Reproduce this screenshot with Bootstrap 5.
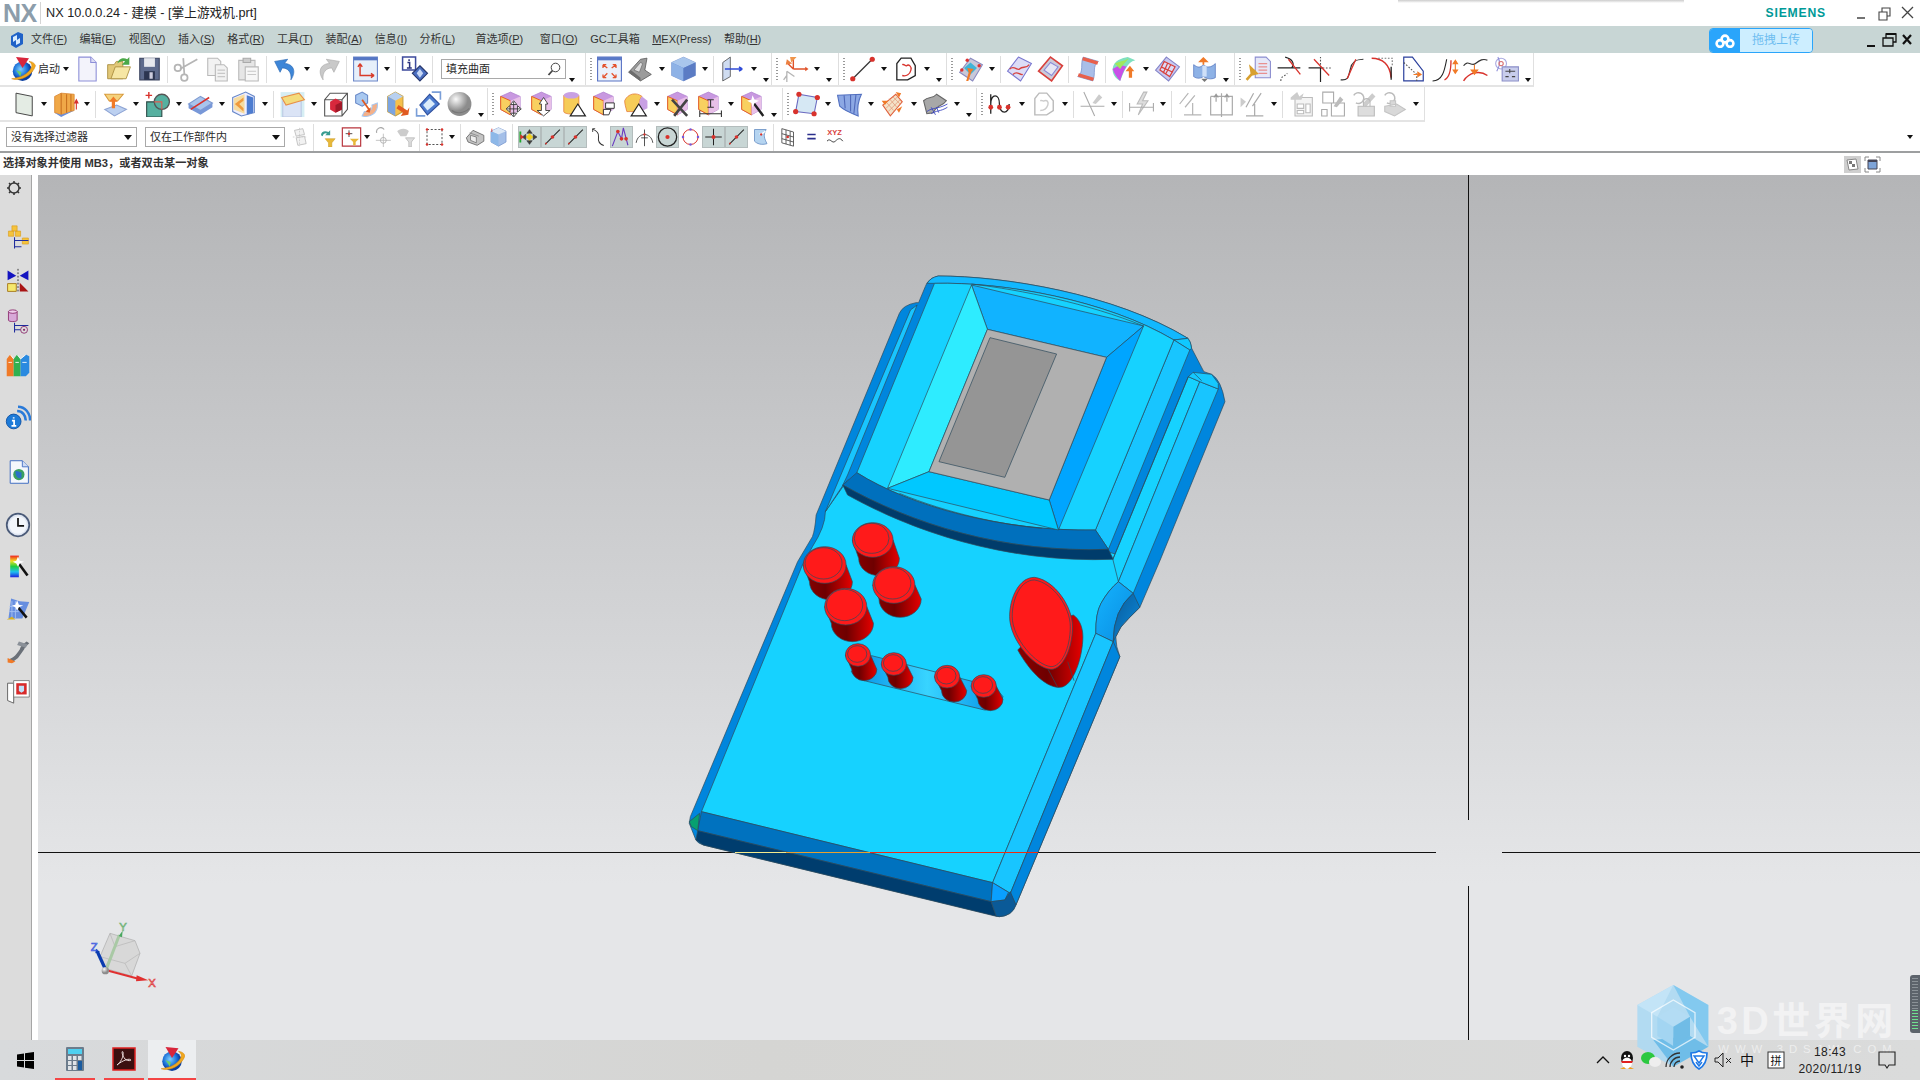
<!DOCTYPE html>
<html lang="zh">
<head>
<meta charset="utf-8">
<title>NX 10.0.0.24</title>
<link rel="stylesheet" href="https://cdn.jsdelivr.net/npm/bootstrap@5.3.0/dist/css/bootstrap.min.css">
<style>
html,body{margin:0;height:1080px;overflow:hidden;background:#fff}
body{width:1920px;font:11px "Liberation Sans","Noto Sans CJK SC",sans-serif;color:#2a2a2a;line-height:1}
.ttlbar{height:26px;position:relative}
.nxlogo{width:41px;padding-left:3px;font:bold 25px "Liberation Sans",sans-serif;color:#8c9dab;border-right:1px solid #d5d5d5;height:22px;line-height:22px;letter-spacing:-.5px}
.ttltext{margin-left:5px;font-size:12.7px;color:#222}
.siem{font:bold 12.2px "Liberation Sans",sans-serif;color:#009a98;letter-spacing:.8px;margin-right:28px}
.winbtn{width:22px;height:18px}
.wb2{width:18px;height:18px}
.shade{position:absolute;left:1398px;top:0;width:286px;height:3px;background:linear-gradient(#ccc,#fff);}
.menubar{height:27px;background:#c8d6d5}
.menubar .mlogo{width:16px;height:18px;margin:0 6px 0 9px}
.mitems{gap:12.5px;font-size:11px;color:#333}
.mitems u{text-underline-offset:1px}
.upl{width:104px;height:25px;margin-top:2px;border:1px solid #2aa5fb;border-radius:4px;overflow:hidden;margin-right:49px}
.upl b{width:30px;height:100%;background:#2aa5fb}
.upl span{flex:1;background:#cdeeff;color:#6dbdf0;font-size:12px;text-align:center;line-height:23px}
.tb{display:flex;align-items:center;background:#fff;flex:none}
.tb1{height:34px;width:1534px;border-right:1px solid #e0e0e0;border-bottom:2px solid #e4e4e4}
.tb2{height:35px;width:1425px;padding-top:1px;border-right:1px solid #e0e0e0;border-bottom:2px solid #e4e4e4}
.tb3{height:31px;width:1920px;padding-left:6px;padding-top:1px;border-bottom:2px solid #9d9fa0;position:relative}
.i{width:31px;height:26px;flex:none}
.tb3 .i{width:23px;height:20px}
.tb3 .i.tg{height:22px;background:#c8d6d5;outline:1px solid #b4bdbd;outline-offset:-1px}
.cr{width:12px;height:10px;flex:none;display:flex;justify-content:center;align-items:center}
.cr.w8{width:8px}
.cr::after,.cb::after{content:"";border:3.5px solid transparent;border-top:4px solid #111;border-bottom:0}
.cb{width:11px;height:14px;flex:none;display:flex;justify-content:center;align-items:flex-end;align-self:center;padding-bottom:0;margin-top:12px}
.sp{width:6px;height:27px;flex:none;position:relative}
.sp::after{content:"";position:absolute;left:2px;top:0;bottom:0;width:1px;background:#dedede}
.gs{width:9px;height:32px;flex:none;border-left:1px solid #dedede;position:relative}
.gs::after{content:"";position:absolute;left:4px;top:5px;bottom:3px;width:2px;background:repeating-linear-gradient(#999 0 1px,transparent 1px 3px)}
.s1{width:1px;flex:none}.s2{width:2px;flex:none}.s3{width:3px;flex:none}.s4{width:4px;flex:none}
.cbx{border:1px solid #a9a9a9;height:20px;padding:0 4px;background:#fff;font-size:11px;flex:none}
.cbx::after{content:"";border:4px solid transparent;border-top:5px solid #111;border-bottom:0}
.srch{width:125px;margin-left:5px}
.srch::after{display:none}
.f1{width:131px}.f2{width:140px;margin-left:8px}
.stat{height:22px;padding:0 3px;font-size:11.2px;font-weight:bold;color:#333;flex:none}
.stat svg{width:17px;height:17px;margin-left:3px}
.stat .endic{margin-right:36px}
.mainar{flex:1;min-height:0;position:relative}
.lp{width:32px;background:#dcdcdc;border-right:1px solid #a6a6a6;flex:none}
.lp svg{width:26px;height:26px;display:block;flex:none;margin-left:5px}
.lp svg:nth-child(1){height:18px;width:30px;margin:4px 0 0}
.lp svg:nth-child(2){margin-top:28px}.lp svg:nth-child(3){margin-top:17px}.lp svg:nth-child(4){margin-top:15px}
.lp svg:nth-child(5){margin-top:17px}.lp svg:nth-child(6){margin-top:27px}.lp svg:nth-child(7){margin-top:28px}
.lp svg:nth-child(8){margin-top:27px}.lp svg:nth-child(9){margin-top:15px}.lp svg:nth-child(10){margin-top:17px}
.lp svg:nth-child(11){margin-top:17px}.lp svg:nth-child(12){margin-top:13px}
.lpgap{width:6px;flex:none;background:#fff}
.vp{flex:1;position:relative;overflow:hidden;background:linear-gradient(#b4b5b7 0,#e5e6e8 82%,#e5e6e8 100%)}
.vp>svg{position:absolute;left:0;top:0;width:1882px;height:865px}
.mdl *{vector-effect:non-scaling-stroke;stroke:#2e4a5c;stroke-width:.7}
.mdl .ln{fill:none}
.tkb{height:40px;flex:none;background:linear-gradient(90deg,#d8dadc,#d5d5d3 40%,#dadbdb);position:relative}
.tkb .st{width:50px;height:40px}
.tapp{width:40px;height:40px;border-bottom:2px solid #f44545;margin-right:9px}
.tapp.act{width:48px;background:#eceef0}
.tapp svg{width:26px;height:26px}
.tray{z-index:2;margin-right:21px;height:40px}
.tray svg{width:24px;height:20px;flex:none}
.tray .ch{width:24px;text-align:center;font-size:14px;color:#111;flex:none}
.clock{width:76px;margin:0 7px 0 4px;text-align:center;font-size:12px;color:#222;letter-spacing:.4px;gap:5px}
.wm{position:absolute;left:1580px;top:960px;width:340px;height:120px;z-index:1}
.sld{position:absolute;left:1910px;top:975px;width:10px;height:58px;background:#5c636b;border-radius:3px 0 0 3px;z-index:1;padding:3px 2px}
.sld i{display:block;height:100%;background:repeating-linear-gradient(#8a9197 0 1px,transparent 1px 3px);position:relative}
.sld i::after{content:"";position:absolute;left:0;right:0;bottom:0;height:20px;background:repeating-linear-gradient(#6fe08f 0 1px,#5c636b 1px 3px)}
.defs{position:absolute;width:0;height:0}
</style>
</head>
<body class="d-flex flex-column">
<svg class="defs" aria-hidden="true">
<defs>
<linearGradient id="gR" x1="0" x2="1" y1="0" y2="0"><stop offset="0" stop-color="#8c0000"/><stop offset=".45" stop-color="#6e0000"/><stop offset="1" stop-color="#e60000"/></linearGradient>
<linearGradient id="gB" x1="0" x2="1" y1="0" y2="1"><stop offset="0" stop-color="#cfd8f5"/><stop offset="1" stop-color="#3a66c8"/></linearGradient>
<linearGradient id="gS" x1="0" x2="1" y1="0" y2="0"><stop offset="0" stop-color="#0490e6"/><stop offset=".5" stop-color="#38d4ff"/><stop offset="1" stop-color="#0490e6"/></linearGradient>
<linearGradient id="gN" x1="0" x2="1" y1="0" y2="1"><stop offset="0" stop-color="#14b4ff"/><stop offset="1" stop-color="#0a8ce0"/></linearGradient>
<linearGradient id="gD" x1="0" x2="1" y1="0" y2="1"><stop offset="0" stop-color="#0a5a98"/><stop offset="1" stop-color="#0a8ce0"/></linearGradient>
<radialGradient id="gG" cx=".35" cy=".3"><stop offset="0" stop-color="#fafafa"/><stop offset="1" stop-color="#8c8c8c"/></radialGradient>
<radialGradient id="gE" cx=".4" cy=".4"><stop offset="0" stop-color="#7fd0ff"/><stop offset=".7" stop-color="#1a70d8"/><stop offset="1" stop-color="#0b3fa0"/></radialGradient>
<g id="hxb"><path d="M11 1 20 5 20 17 11 22 2 17 2 5Z" fill="#c898e0" stroke="#b080d0" stroke-width=".7"/><path d="M2 5 11 9 11 22 2 17Z" fill="#f8d060" stroke="#e86020" stroke-width=".9"/><path d="M11 9 20 5 20 17 11 22Z" fill="#e8c0e8"/></g>
<symbol id="start" viewBox="0 0 24 24"><circle cx="12" cy="14" r="9" fill="url(#gE)"/><path d="M2 21C10 24 21 18 24 9 23 6 20 5 18 5 21 7 21 9 20 11 17 17 10 20 2 21Z" fill="#f0a820" stroke="#d88a10" stroke-width=".5"/><path d="M6 1 18 2 12 11Z" fill="#d8263c"/><path d="M6 13l5 2-1 4z" fill="#6bd06b"/></symbol>
<symbol id="new" viewBox="0 0 24 24"><path d="M4 1H15L20 6V23H4Z" fill="#f3f3fb" stroke="#8d8fd8"/><path d="M15 1V6H20" fill="#dcdcf4" stroke="#8d8fd8"/></symbol>
<symbol id="open" viewBox="0 0 24 24"><path d="M2 8H8L10 5H16V21H2Z" fill="#e2c878" stroke="#a88b3c" stroke-width=".8"/><path d="M5 21 9 10H23L19 21Z" fill="#f6e6a4" stroke="#a88b3c" stroke-width=".8"/><path d="M11 7C12 2 17 1 20 3L22 1V8H15L18 5C16 4 13 5 11 7Z" fill="#4aa848"/></symbol>
<symbol id="save" viewBox="0 0 24 24"><path d="M3 2H21V22H3Z" fill="#5d6a8c" stroke="#3c4560"/><path d="M7 2H17V10H7Z" fill="#e6e8ee"/><path d="M7 14H17V22H7Z" fill="#2c3550"/><path d="M12 15H15V21H12Z" fill="#ccd"/></symbol>
<symbol id="cut" viewBox="0 0 24 24"><g fill="none" stroke="#b5b5b5" stroke-width="1.6"><circle cx="4" cy="11" r="3"/><circle cx="10" cy="20" r="3"/><path d="M6 12 22 3M10 17 9 2"/></g></symbol>
<symbol id="copy" viewBox="0 0 24 24"><g fill="#f2f2f2" stroke="#b9b9b9"><path d="M3 2H12L15 5V18H3Z"/><path d="M10 8H18L21 11V23H10Z"/></g><path d="M12 13H19M12 16H19M12 19H19" stroke="#c8c8c8"/></symbol>
<symbol id="paste" viewBox="0 0 24 24"><path d="M3 4H18V22H3Z" fill="#e6e6e6" stroke="#b9b9b9"/><path d="M7 2H14V6H7Z" fill="#ccc" stroke="#aaa"/><path d="M9 10H21V23H9Z" fill="#f7f7f7" stroke="#b9b9b9"/><path d="M11 14H19M11 17H19" stroke="#c8c8c8"/></symbol>
<symbol id="undo" viewBox="0 0 24 24"><path d="M2 5 14 3 11 7C18 7 23 13 17 22 18 15 14 11 9 11L7 15Z" fill="#3d86d8" stroke="#2a68b4" stroke-width=".6"/></symbol>
<symbol id="redo" viewBox="0 0 24 24"><path d="M22 5 10 3 13 7C6 7 1 13 7 22 6 15 10 11 15 11L17 15Z" fill="#c9c9c9" stroke="#aaa" stroke-width=".6"/></symbol>
<symbol id="wcs" viewBox="0 0 24 24"><path d="M1 1H23V23H1Z" fill="#e6effa" stroke="#6a85c8"/><path d="M1 1H23V4H1Z" fill="#5576c4"/><path d="M7 7V18H20M7 7 5 10M7 7 9 10M20 18 17 16M20 18 17 20" fill="none" stroke="#d83a28" stroke-width="1.3"/></symbol>
<symbol id="info" viewBox="0 0 24 24"><path d="M1 1H13V13H1Z" fill="#fff" stroke="#3c4a9c" stroke-width="1.4"/><path d="M7 3V4.500M5.500 6H7.500V11M5 11H9.500" fill="none" stroke="#28307c" stroke-width="1.4"/><path d="M17 9 24 16 17 23 10 16Z" fill="#4a6ec0" stroke="#26366c"/><path d="M17 12 20 16 17 20 14 16Z" fill="#c8d8f5"/></symbol>
<symbol id="fit" viewBox="0 0 24 24"><path d="M1 1H23V23H1Z" fill="#eaf1fb" stroke="#5872c4"/><path d="M1 1H23V4H1Z" fill="#5a7ac8"/><path d="M6 8 10 11M18 8 14 11M6 20 10 16M18 20 14 16M6 8V11M6 8H9M18 8V11M18 8H15M6 20V17M6 20H9M18 20V17M18 20H15" fill="none" stroke="#e4532e" stroke-width="1.2"/></symbol>
<symbol id="shd" viewBox="0 0 24 24"><path d="M1 15 12 3 18 2 16 13 22 17 12 23Z" fill="#9b9b9b" stroke="#555" stroke-width=".7"/><path d="M6 13 12 6 14 7 11 15Z" fill="#dedede" stroke="#555" stroke-width=".5"/><path d="M1 15 12 23V20L3 13Z" fill="#6c6c6c"/></symbol>
<symbol id="cube" viewBox="0 0 24 24"><path d="M12 1 23 6 23 18 12 23 1 18 1 6Z" fill="#5f8bd8" stroke="#7f93c4" stroke-width=".5"/><path d="M1 6 12 1 23 6 12 11Z" fill="#a9c6ec"/><path d="M1 6 12 11V23L1 18Z" fill="#8eb2e6"/><path d="M12 11 23 6V18L12 23Z" fill="#5b7cc4"/></symbol>
<symbol id="pln" viewBox="0 0 24 24"><path d="M3 6 10 1V19L3 23Z" fill="#cfdcf0" stroke="#444" stroke-width=".7"/><path d="M5 12H21M21 12 18 10M21 12 18 14" fill="none" stroke="#2f4bd8" stroke-width="1.5"/></symbol>
<symbol id="cs" viewBox="0 0 24 24"><path d="M10 12V2M10 12 22 12M10 12 4 6" stroke="#e0532a" stroke-width="1.3" fill="none"/><path d="M7 1 13 1 8 6Z" fill="#f0954c"/><path d="M4 3 9 7 3 8Z" fill="#ec8040"/><path d="M21 10 24 12 21 14Z" fill="#e0532a"/><path d="M4 24V14M4 14 11 19M4 18 1 22" stroke="#b5b5b5" stroke-width="1.2" fill="none"/></symbol>
<symbol id="lin" viewBox="0 0 24 24"><path d="M3 21 21 3" stroke="#333" stroke-width="1.1"/><circle cx="3" cy="21" r="2.4" fill="#d8322c"/><circle cx="21" cy="3" r="2.4" fill="#d8322c"/></symbol>
<symbol id="hrt" viewBox="0 0 24 24"><path d="M4 22V7L8 2H17L21 9V18L14 22Z" fill="none" stroke="#222" stroke-width="1.2"/><path d="M9 8C11 7 12 10 13 9 15 7 18 10 17 13 16 17 13 19 9 18" fill="none" stroke="#d8322c" stroke-width="1.2"/></symbol>
<symbol id="s1" viewBox="0 0 24 24"><path d="M12 2 23 8 14 23 2 15Z" fill="#c8c8d8" stroke="#8a8ac0"/><path d="M6 11 12 6 18 11 12 17Z" fill="#3fb5d8"/><circle cx="9" cy="4" r="1.6" fill="#d33"/><circle cx="20" cy="9" r="1.6" fill="#d33"/><circle cx="4" cy="13" r="1.6" fill="#d33"/><path d="M8 23 11 13 13 14 10 23ZM9 11 15 12 11 17Z" fill="#f07a28"/></symbol>
<symbol id="s2" viewBox="0 0 24 24"><path d="M11 1 23 7 13 23 1 14Z" fill="#dcdcf6" stroke="#7a78d0"/><path d="M3 12C7 8 10 14 12 12 15 9 18 12 21 8M6 17C10 13 12 18 15 17" fill="none" stroke="#d8403c" stroke-width="1.2"/></symbol>
<symbol id="s3" viewBox="0 0 24 24"><path d="M12 1 23 9 13 23 1 14Z" fill="#cbcbd8" stroke="#d8403c" stroke-width="1.5"/><path d="M12 6 19 10 13 18 6 13Z" fill="#e6e6f4" stroke="#8a8ad8"/></symbol>
<symbol id="s4" viewBox="0 0 24 24"><path d="M8 1 22 5C16 10 20 15 17 23L3 19C9 14 5 8 8 1Z" fill="#a9bee8" stroke="#7790cc" stroke-width=".7"/><path d="M8 1 22 5 21 8 7 4ZM3 19 17 23 18 20 4 16Z" fill="#e8604c"/></symbol>
<symbol id="s5" viewBox="0 0 24 24"><path d="M1 12C2 4 10 2 15 1L22 4C14 6 12 14 8 23 3 20 1 17 1 12Z" fill="#7fe0c0"/><path d="M1 12C3 17 5 20 8 23 11 14 12 12 14 10L8 8Z" fill="#c850e8"/><path d="M3 7C7 5 11 5 16 2 13 6 10 8 8 12Z" fill="#a0e85c"/><path d="M17 9 21 14H19V20H16V14H13Z" fill="#f07a28"/></symbol>
<symbol id="s6" viewBox="0 0 24 24"><path d="M11 1 23 10 13 23 1 13Z" fill="#c8c8f0" stroke="#8484c8"/><path d="M9 5 19 10 14 19 5 13ZM12 7 8 16M15 8 10 17M6 10 17 15" fill="#eef" fill-opacity=".5" stroke="#d8403c" stroke-width="1.1"/></symbol>
<symbol id="s7" viewBox="0 0 24 24"><path d="M2 8C6 11 8 11 11 8 14 11 18 11 22 7V20C18 22 14 21 11 19 8 21 5 21 2 19Z" fill="#8eb2e6" stroke="#5878c0" stroke-width=".7"/><path d="M10 9H14V19H10Z" fill="#cfe0f8"/><path d="M11 8V2M11 2 8 5H14Z" stroke="#f07a28" fill="#f07a28" stroke-width="1.6"/><path d="M9 21H15L12 24Z" fill="#777"/></symbol>
<symbol id="c1" viewBox="0 0 24 24"><path d="M9 1H19L23 5V20H9Z" fill="#e6e8f8" stroke="#8b8dcf"/><path d="M12 7H20M12 10H20M12 13H20M12 16H20" stroke="#e89090"/><path d="M1 22 9 13M5 11 10 16 6 17Z" stroke="#d8a030" stroke-width="2.4" fill="#e8c060"/></symbol>
<symbol id="c2" viewBox="0 0 24 24"><path d="M1 11H22M8 1C15 3 17 7 14 11" stroke="#222" fill="none" stroke-width="1.1"/><path d="M4 23C4 18 8 19 10 16" stroke="#555" stroke-dasharray="1.5 1.5" fill="none"/><path d="M11 3 22 17" stroke="#d8322c" stroke-width="1.2"/></symbol>
<symbol id="c3" viewBox="0 0 24 24"><path d="M1 11H14M12 11V24" stroke="#222" stroke-width="1.1"/><path d="M14 11H22M12 11V1" stroke="#555" stroke-dasharray="1.5 1.5"/><path d="M6 3 20 18" stroke="#d8322c" stroke-width="1.2"/></symbol>
<symbol id="c4" viewBox="0 0 24 24"><path d="M2 22C10 23 9 18 11 12 12 6 15 3 23 3" fill="none" stroke="#333" stroke-width="1.1"/><path d="M16 3 8 21" stroke="#d8322c" stroke-width="1.2"/></symbol>
<symbol id="c5" viewBox="0 0 24 24"><path d="M2 2C12 2 19 8 20 20" fill="none" stroke="#d8322c" stroke-width="1.4"/><path d="M20 22V10" stroke="#222" stroke-width="1.2"/><path d="M8 2H21V10" stroke="#777" stroke-dasharray="1.5 1.5" fill="none"/></symbol>
<symbol id="c6" viewBox="0 0 24 24"><path d="M3 1H11L21 14V23H3Z" fill="#fff" stroke="#2a3f9c" stroke-width="1.1"/><path d="M3 6 15 17V23" stroke="#555" stroke-dasharray="1.5 1.5" fill="none"/><path d="M12 17H19M19 17 16 15V19Z" stroke="#f07a28" fill="#f07a28"/></symbol>
<symbol id="c7" viewBox="0 0 24 24"><path d="M1 23C10 23 12 14 14 3" fill="none" stroke="#222" stroke-width="1"/><path d="M12 22C17 20 18 12 18 4" fill="none" stroke="#d8322c" stroke-width="1.2"/><path d="M22 4V16M22 4 20 7H24ZM22 16 20 13H24Z" stroke="#f07a28" fill="#f07a28"/></symbol>
<symbol id="c8" viewBox="0 0 24 24"><path d="M1 9C5 3 8 10 12 7 16 4 19 2 23 4" fill="none" stroke="#333" stroke-width="1.1"/><path d="M1 23C6 15 16 13 23 18" fill="none" stroke="#d8322c" stroke-width="1.3"/><path d="M11 8V15M8 13H14L11 17Z" stroke="#f07a28" fill="#f07a28"/></symbol>
<symbol id="c9" viewBox="0 0 24 24"><circle cx="7" cy="7" r="5" fill="none" stroke="#a9a9e0"/><path d="M4 1C6 4 6 9 3 14" fill="none" stroke="#8a8ad8"/><circle cx="7" cy="7" r="2" fill="none" stroke="#d87070"/><path d="M8 10H23V23H8Z" fill="#c8cdec" stroke="#8a8ec8"/><path d="M11 14H20M15 12V16M11 19H14M17 19H20" stroke="#444"/></symbol>
<symbol id="r1" viewBox="0 0 24 24"><path d="M6 2 21 5V23L6 20Z" fill="#e4ece4" stroke="#444" stroke-width=".9"/></symbol>
<symbol id="r2" viewBox="0 0 24 24"><path d="M2 5 8 2 20 3V18L8 22 2 20Z" fill="#f0a848" stroke="#d88028" stroke-width=".7"/><path d="M8 2V22M13 3V20M17 3V19" stroke="#c87020"/><path d="M2 20 8 22 20 18 14 21 8 24Z" fill="#6c8ed8"/><path d="M22 8V17M22 8 20.500 11H23.500Z" stroke="#d8322c" fill="#d8322c"/></symbol>
<symbol id="r3" viewBox="0 0 24 24"><path d="M3 3H20L15 9H7Z" fill="#f5d27c" stroke="#d89a3c"/><path d="M3 17 14 13 23 17 12 23Z" fill="#bcd0f0" stroke="#8ea4d4"/><path d="M11 5 7 10H9.500V16H12.500V10H15Z" fill="#f07a28"/></symbol>
<symbol id="r4" viewBox="0 0 24 24"><path d="M2 10H16V24H2Z" fill="#56b0a0" stroke="#2c4844"/><circle cx="16" cy="10" r="7" fill="#56b0a0" stroke="#555" stroke-width="1.2"/><path d="M9 10H16V17" fill="none" stroke="#e05a50"/><path d="M4 1V7M1 4H7" stroke="#d8322c" stroke-width="1.3"/></symbol>
<symbol id="r5" viewBox="0 0 24 24"><path d="M12 5 23 11 12 18 1 12Z" fill="#a8c4ec" stroke="#7e9ad0"/><path d="M1 12V16L12 22 23 15V11L12 18Z" fill="#7898d8"/><path d="M3 17 20 6" stroke="#d8322c" stroke-width="1.4"/></symbol>
<symbol id="r6" viewBox="0 0 24 24"><path d="M2 6 14 1 22 5V20L10 23 2 19Z" fill="#eef" stroke="#6888c8"/><path d="M15 4 21 6V20L15 22Z" fill="#4d7cd0"/><path d="M3 7 13 3V21L3 17Z" fill="#f6dca0"/><path d="M4 12 12 6V9L8 12 12 16V19Z" fill="#f09a3c"/></symbol>
<symbol id="r7" viewBox="0 0 24 24"><path d="M1 1H23V24H1Z" fill="#d6eef4"/><path d="M3 9H20V24H3Z" fill="#dbe4f6" stroke="#b0bcdc" stroke-width=".7"/><path d="M2 6 18 2 23 8 6 13Z" fill="#f4dc7c" stroke="#e89048"/></symbol>
<symbol id="r8" viewBox="0 0 24 24"><path d="M7 2H23V17L18 23H2V8ZM2 8H18V23M18 8 23 2" fill="none" stroke="#555"/><path d="M12 7 18 10V17L12 20 7 17V10Z" fill="#d8283c"/><path d="M12 13 18 10V17L12 20Z" fill="#a01828"/></symbol>
<symbol id="r9" viewBox="0 0 24 24"><path d="M2 4 8 1 13 4V11L8 14 2 11Z" fill="#a8c8f0" stroke="#6a8ac8"/><path d="M8 23C16 25 23 20 22 11L17 13C18 17 14 20 10 19Z" fill="#f4b088" stroke="#a8c8f0"/><path d="M8 8 15 18" stroke="#e05a20" stroke-width="1.6"/><path d="M16 15 15 20 11 19Z" fill="#e05a20"/></symbol>
<symbol id="r10" viewBox="0 0 24 24"><path d="M3 5 10 1 17 5V19L10 23 3 19Z" fill="#f6c04c" stroke="#c8a040"/><path d="M3 5 10 1 17 5 10 9Z" fill="#b8d0f0"/><path d="M3 5 10 9V23L3 19Z" fill="#7ca4e0"/><path d="M13 13 21 18 23 15 22 22 15 23 17 20 11 16Z" fill="#e05a20"/></symbol>
<symbol id="r11" viewBox="0 0 24 24"><path d="M13 3 22 12 11 22 4 13Z" fill="#4d7cd0" stroke="#2f4f9c"/><path d="M13 7 18 12 11 18 7 13Z" fill="#dcecfa"/><path d="M15 1H23V8M1 16V23H9" fill="none" stroke="#7a9ed8" stroke-width="1.5"/></symbol>
<symbol id="r12" viewBox="0 0 24 24"><circle cx="12" cy="12" r="11" fill="url(#gG)"/><path d="M5 18C8 21 16 21 21 16" stroke="#777" fill="none"/></symbol>
<symbol id="f1" viewBox="0 0 24 24"><use href="#hxb"/><path d="M14 10V23M8 16.500H20M14 9 11 12.500H17ZM14 24 11 20.500H17ZM7 16.500 10.500 13.500V19.500ZM21 16.500 17.500 13.500V19.500Z" stroke="#333" fill="#fff" stroke-width=".8"/></symbol>
<symbol id="f2" viewBox="0 0 24 24"><use href="#hxb"/><path d="M13 6 9 12H11V18H7L13 23 19 18H15V12H17Z" fill="#fff" stroke="#333" stroke-width=".8"/></symbol>
<symbol id="f3" viewBox="0 0 24 24"><path d="M3 4V19C3 22 17 22 17 19V4Z" fill="#f6cc58" stroke="#e06820" stroke-width=".6"/><ellipse cx="10" cy="4" rx="7" ry="3" fill="#c8a0e4"/><path d="M16 12 23 23H9Z" fill="#fff" stroke="#222" stroke-width="1.1"/></symbol>
<symbol id="f4" viewBox="0 0 24 24"><use href="#hxb"/><path d="M13 11H21V16H13ZM11 17H18L16 22H11Z" fill="#fff" stroke="#222" stroke-width=".8"/></symbol>
<symbol id="f5" viewBox="0 0 24 24"><path d="M2 9C5 2 13 1 18 5 15 8 15 12 17 19H4C3 15 2 12 2 9Z" fill="#f6cc58" stroke="#e06820" stroke-width=".6"/><path d="M18 5 23 9V16L17 19C15 12 15 8 18 5Z" fill="#c8a0e4"/><path d="M15 12 22 23H8Z" fill="#fff" stroke="#222" stroke-width="1.1"/></symbol>
<symbol id="f6" viewBox="0 0 24 24"><use href="#hxb"/><path d="M6 8 20 23M20 8 8 23" stroke="#444" stroke-width="2.4"/></symbol>
<symbol id="f7" viewBox="0 0 24 24"><use href="#hxb"/><path d="M3 21H23M3 18V24M23 18V24M13 8V15M10 8H16M10 15H16" stroke="#333" fill="none"/></symbol>
<symbol id="f8" viewBox="0 0 24 24"><use href="#hxb"/><path d="M13 11 22 23" stroke="#222" stroke-width="2.2"/><path d="M12 4 14 8 18 9 14 11 12 15 11 11 7 9 11 8Z" fill="#fff"/></symbol>
<symbol id="d1" viewBox="0 0 24 24"><path d="M5 3 22 6 19 21 2 19Z" fill="#d6e8f4" stroke="#6a6ac0"/><g fill="#d8322c"><circle cx="5" cy="3" r="2.400"/><circle cx="22" cy="6" r="2.400"/><circle cx="19" cy="21" r="2.400"/><circle cx="2" cy="19" r="2.400"/></g></symbol>
<symbol id="d2" viewBox="0 0 24 24"><path d="M1 4 23 3C20 9 19 16 20 23 12 20 6 17 3 14Z" fill="#8ca8e4" stroke="#5270c0"/><path d="M7 4 8 16M13 3.500 13 19M18 3 16 21" stroke="#4f68b8"/></symbol>
<symbol id="d3" viewBox="0 0 24 24"><path d="M3 13 15 3 21 10 10 23Z" fill="#f4e2c8" stroke="#e0603c"/><path d="M6 10 13 18M9 7 16 15M12 5 19 12M6 16 17 5M8 19 19 8" stroke="#e09878" stroke-width=".7"/><path d="M15 1 20 2 18 6ZM21 14 18 20 16 17ZM2 9 5 13 8 9Z" fill="#f07a28"/></symbol>
<symbol id="d4" viewBox="0 0 24 24"><path d="M1 9C6 4 9 8 13 3L22 9C18 15 14 11 10 20L4 21Z" fill="#a8a8a8" stroke="#666"/><path d="M4 19C9 15 14 17 23 12M8 21C12 18 17 19 23 15M8 15 12 22M13 15 15 20" fill="none" stroke="#3a46c0" stroke-width=".8"/></symbol>
<symbol id="e1" viewBox="0 0 24 24"><path d="M3 21V3M3 12C3 2 11 2 11 12S20 22 20 12" fill="none" stroke="#222" stroke-width="1.2"/><g fill="#d8322c"><circle cx="3" cy="15" r="2.200"/><circle cx="11" cy="15" r="2.200"/><circle cx="19" cy="15" r="2.200"/></g></symbol>
<symbol id="e2" viewBox="0 0 24 24"><path d="M4 22V7L8 2H15L21 9V18L15 22Z" fill="none" stroke="#bbb" stroke-width="1.3"/><path d="M9 9C11 8 12 10 13 9 15 8 17 10 16 13 15 16 13 18 9 18" fill="none" stroke="#ccc" stroke-width="1.3"/></symbol>
<symbol id="e3" viewBox="0 0 24 24"><path d="M4 1 14 23M1 14H23" stroke="#aaa"/><path d="M12 11 18 3 21 6 15 12Z" fill="#ccc"/></symbol>
<symbol id="e4" viewBox="0 0 24 24"><path d="M14 1 8 12H13L9 22 18 9H13L17 1Z" fill="#ddd" stroke="#bbb"/><path d="M1 15H23M1 11V19M23 11V19" stroke="#aaa"/></symbol>
<symbol id="e5" viewBox="0 0 24 24"><path d="M2 12 10 2M7 15 16 4M6 22H22M14 11V22" stroke="#b5b5b5" stroke-width="1.1" fill="none"/></symbol>
<symbol id="e6" viewBox="0 0 24 24"><path d="M2 5V22H22V5H2M12 2V24" fill="none" stroke="#aaa" stroke-width="1.1"/><path d="M7 3V10M17 3V10M5 6 7 3 9 6M15 6 17 3 19 6" fill="none" stroke="#999"/></symbol>
<symbol id="e7" viewBox="0 0 24 24"><path d="M1 6 6 10 1 15Z" fill="#ccc"/><path d="M6 15 13 2M12 14 20 2M6 23H22M14 12V23" stroke="#aaa" stroke-width="1.1" fill="none"/></symbol>
<symbol id="e8" viewBox="0 0 24 24"><path d="M6 6H22V23H6Z" fill="#f4f4f4" stroke="#bbb"/><path d="M2 6 8 1 10 5 14 2 12 8H2Z" fill="#ccc"/><path d="M8 12H14V16H8ZM16 12H20V20H16ZM8 18H14V21H8Z" fill="#fff" stroke="#bbb"/></symbol>
<symbol id="e9" viewBox="0 0 24 24"><path d="M3 1H13V11H3ZM11 11H23V23H11ZM2 17H7V23H2Z" fill="#fff" stroke="#aaa"/><path d="M13 14 19 5 22 8 16 15Z" fill="#bbb"/></symbol>
<symbol id="e10" viewBox="0 0 24 24"><path d="M3 4A5 5 0 1 1 5 11" fill="none" stroke="#bbb" stroke-width="1.4"/><path d="M11 12 20 2 23 5 14 15Z" fill="#ccc"/><path d="M7 14H22V23H7Z" fill="#ddd" stroke="#bbb"/><path d="M12 14V10A3 3 0 0 1 18 10V14" fill="none" stroke="#bbb"/></symbol>
<symbol id="e11" viewBox="0 0 24 24"><path d="M3 4A5 5 0 1 1 5 11" fill="none" stroke="#bbb" stroke-width="1.4"/><path d="M8 9V14H13V9ZM3 14 14 12 22 17 12 23 3 19Z" fill="#d8d8d8" stroke="#c4c4c4"/></symbol>
<symbol id="x1" viewBox="0 0 24 24"><path d="M6 4 16 2 18 9 8 11ZM8 13 18 11 20 20 10 22Z" fill="#f2f2f2" stroke="#bbb"/><path d="M12 1V23M4 12H21" stroke="#ccc" stroke-dasharray="2 1.500"/></symbol>
<symbol id="x2" viewBox="0 0 24 24"><path d="M8 14H20L16 19V24H12V19Z" fill="#e8b838" stroke="#c89820" stroke-width=".6"/><path d="M3 10C3 5 8 4 12 6L14 4V10H8L10 8C8 7 6 8 5 11Z" fill="#3a9c90"/></symbol>
<symbol id="x3" viewBox="0 0 24 24"><path d="M1 1H23V23H1Z" fill="#fff" stroke="#b8343c" stroke-width="1.4"/><path d="M9 4V12M5 8H13" stroke="#333"/><circle cx="9" cy="8" r="1.500" fill="#d8322c"/><path d="M10 14H21L17 18V22H14V18Z" fill="#e8b838"/></symbol>
<symbol id="x4" viewBox="0 0 24 24"><path d="M13 8V24M4 16H22" stroke="#bbb"/><circle cx="13" cy="16" r="3.500" fill="none" stroke="#aaa"/><path d="M5 7A5 5 0 0 1 14 3" fill="none" stroke="#aaa" stroke-width="1.400"/></symbol>
<symbol id="x5" viewBox="0 0 24 24"><path d="M12 13H23L19 18V24H16V18Z" fill="#ddd" stroke="#bbb"/><path d="M2 5C5 1 14 1 16 5L13 11H6Z" fill="#ccc"/></symbol>
<symbol id="x6" viewBox="0 0 24 24"><path d="M3 3H21V21H3Z" fill="none" stroke="#333" stroke-dasharray="2.500 2"/><g fill="#d8322c"><circle cx="3" cy="3" r="1.500"/><circle cx="21" cy="3" r="1.500"/><circle cx="21" cy="21" r="1.500"/><circle cx="3" cy="21" r="1.500"/></g></symbol>
<symbol id="x7" viewBox="0 0 24 24"><path d="M1 13 9 4 22 10 22 17 14 22 3 18Z" fill="#c4c4c4" stroke="#666"/><path d="M6 10 13 12V19L6 16Z" fill="#eee" stroke="#777"/><path d="M5 7 16 11" stroke="#888"/></symbol>
<symbol id="x8" viewBox="0 0 24 24"><path d="M3 5 12 1 21 5V18L12 23 3 18Z" fill="#a4bfe8" stroke="#7d9ad0"/><path d="M3 5 12 9 21 5 12 1Z" fill="#dce8f6"/><path d="M3 5 12 9V23L3 18Z" fill="#8db8e8"/><path d="M4 2V6" stroke="#d8322c"/></symbol>
<symbol id="y1" viewBox="0 0 24 24"><path d="M12 4V20M4 12H20M12 4 9 8H15ZM12 20 9 16H15ZM4 12 8 9V15ZM20 12 16 9V15Z" stroke="#333" fill="#444" stroke-width=".6"/><path d="M12 8 16 12 12 16 8 12Z" fill="#f0d020"/><path d="M2 6V18" stroke="#1fa82c" stroke-width="2"/><path d="M2 9 6 12 2 15Z" fill="#d8322c"/></symbol>
<symbol id="y2" viewBox="0 0 24 24"><path d="M4 20 20 4" stroke="#222" stroke-width="1.1"/><circle cx="12" cy="12" r="2" fill="#d8322c"/><circle cx="5" cy="19" r="1" fill="#d8322c"/></symbol>
<symbol id="y3" viewBox="0 0 24 24"><path d="M3 4C9 5 12 7 12 12S14 20 20 21" transform="rotate(10 12 12)" fill="none" stroke="#333" stroke-width="1.2"/><path d="M8 2H5V6" fill="none" stroke="#333"/></symbol>
<symbol id="y4" viewBox="0 0 24 24"><path d="M2 22 8 6 12 14 14 2 19 21" fill="none" stroke="#6a3ac0" stroke-width="1.2"/><g fill="#d8322c"><circle cx="8" cy="6" r="2"/><circle cx="12" cy="14" r="2"/><circle cx="17" cy="14" r="2"/></g></symbol>
<symbol id="y5" viewBox="0 0 24 24"><path d="M2 19C3 12 8 9 12 9S21 12 22 19M12 3V23M8 13 16 13" fill="none" stroke="#333"/><circle cx="12" cy="9" r="1.400" fill="#d8322c"/></symbol>
<symbol id="y6" viewBox="0 0 24 24"><circle cx="12" cy="12" r="10" fill="none" stroke="#222" stroke-width="1.4"/><circle cx="12" cy="12" r="2.300" fill="#d8322c"/></symbol>
<symbol id="y7" viewBox="0 0 24 24"><circle cx="12" cy="12" r="9" fill="none" stroke="#d8322c" stroke-width="1.2"/><g fill="#7a5ad8"><circle cx="12" cy="3" r="1.500"/><circle cx="12" cy="21" r="1.500"/><circle cx="3" cy="12" r="1.500"/><circle cx="21" cy="12" r="1.500"/></g></symbol>
<symbol id="y8" viewBox="0 0 24 24"><path d="M12 3V21M3 12H21" stroke="#222" stroke-width="1.1"/><circle cx="12" cy="12" r="2.200" fill="#d8322c"/></symbol>
<symbol id="y9" viewBox="0 0 24 24"><path d="M6 3H20C16 10 18 14 21 20 14 22 9 20 6 17Z" fill="#b5d4f0" stroke="#6a90c4"/><path d="M12 8C15 9 17 7 19 5" fill="none" stroke="#fff" stroke-width="1.5"/><circle cx="14" cy="9" r="1.400" fill="#d8322c"/></symbol>
<symbol id="g1" viewBox="0 0 24 24"><path d="M4 2 18 6V23L4 19ZM4 8 18 12M4 14 18 18M9 3.500V20.500M14 5V22" fill="#fff" stroke="#444"/><circle cx="11" cy="12" r="1.600" fill="#d8322c"/></symbol>
</defs>
</svg>

<div class="ttlbar d-flex align-items-center flex-none">
  <div class="nxlogo">NX</div>
  <div class="ttltext">NX 10.0.0.24 - 建模 - [掌上游戏机.prt]</div>
  <div class="shade"></div>
  <div class="ms-auto siem">SIEMENS</div>
  <svg class="winbtn" viewBox="0 0 22 18"><path d="M3 14H11" stroke="#444" stroke-width="1.5"/></svg>
  <svg class="winbtn" viewBox="0 0 22 18"><path d="M3 8H11V16H3ZM6 8V4H14V12H11" fill="none" stroke="#444" stroke-width="1.1"/></svg>
  <svg class="winbtn" viewBox="0 0 22 18"><path d="M4 3 15 14M15 3 4 14" stroke="#444" stroke-width="1.3"/></svg>
</div>

<div class="menubar d-flex align-items-center flex-none">
  <svg class="mlogo" viewBox="0 0 16 18"><path d="M2 5 9 1 14 3V13L7 17 2 14Z" fill="#1f62c8"/><path d="M4 6 8 4V9L11 7V12L7 14V9L4 11Z" fill="#d8ecff"/></svg>
  <div class="mitems d-flex">
    <span>文件(<u>F</u>)</span><span>编辑(<u>E</u>)</span><span>视图(<u>V</u>)</span><span>插入(<u>S</u>)</span><span>格式(<u>R</u>)</span><span>工具(<u>T</u>)</span><span>装配(<u>A</u>)</span><span>信息(<u>I</u>)</span><span>分析(<u>L</u>)</span><span class="ms-2">首选项(<u>P</u>)</span><span class="ms-1">窗口(<u>O</u>)</span><span>GC工具箱</span><span><u>M</u>EX(Press)</span><span>帮助(<u>H</u>)</span>
  </div>
  <div class="ms-auto d-flex upl align-self-start"><b class="d-flex align-items-center justify-content-center"><svg width="20" height="14" viewBox="0 0 20 14"><g fill="none" stroke="#fff" stroke-width="2.600"><circle cx="10" cy="5" r="3.400"/><circle cx="5" cy="9.500" r="3.400"/><circle cx="15" cy="9.500" r="3.400"/></g></svg></b><span>拖拽上传</span></div>
  <svg class="wb2" viewBox="0 0 18 18"><path d="M5 15H13" stroke="#111" stroke-width="2"/></svg>
  <svg class="wb2" viewBox="0 0 18 18"><path d="M3 7H13V15H3ZM6 7V3H16V11H13" fill="none" stroke="#111" stroke-width="1.300"/><path d="M6 3H16" stroke="#111" stroke-width="2"/></svg>
  <svg class="wb2 me-1" viewBox="0 0 18 18"><path d="M5 4 13 13M13 4 5 13" stroke="#111" stroke-width="2.200"/></svg>
</div>

<div class="tb tb1">
  <span class="s4"></span><span class="s3"></span>
  <svg class="i"><use href="#start"/></svg><span>启动</span><span class="cr"></span>
  <svg class="i"><use href="#new"/></svg><svg class="i"><use href="#open"/></svg><svg class="i"><use href="#save"/></svg><span class="sp"></span>
  <svg class="i"><use href="#cut"/></svg><svg class="i"><use href="#copy"/></svg><svg class="i"><use href="#paste"/></svg><span class="sp"></span>
  <svg class="i"><use href="#undo"/></svg><span class="cr"></span><svg class="i"><use href="#redo"/></svg><span class="sp"></span>
  <svg class="i"><use href="#wcs"/></svg><span class="cr"></span><span class="sp"></span>
  <svg class="i"><use href="#info"/></svg><span class="sp"></span>
  <div class="cbx srch d-flex align-items-center justify-content-between"><span>填充曲面</span><svg width="14" height="14" viewBox="0 0 14 14"><circle cx="8.500" cy="5.500" r="4.300" fill="#fff" stroke="#444"/><path d="M5.500 8.500 1.500 13" stroke="#444" stroke-width="1.800"/></svg></div><span class="cb"></span>
  <span class="s4"></span><span class="s4"></span><span class="gs"></span>
  <svg class="i"><use href="#fit"/></svg><svg class="i"><use href="#shd"/></svg><span class="cr"></span><svg class="i"><use href="#cube"/></svg><span class="cr"></span><span class="sp"></span>
  <svg class="i"><use href="#pln"/></svg><span class="cr"></span><span class="cb"></span><span class="gs"></span>
  <svg class="i"><use href="#cs"/></svg><span class="cr"></span><span class="cb"></span><span class="s4"></span><span class="gs"></span>
  <svg class="i"><use href="#lin"/></svg><span class="cr"></span><svg class="i"><use href="#hrt"/></svg><span class="cr"></span><span class="cb"></span><span class="s2"></span><span class="gs"></span>
  <svg class="i"><use href="#s1"/></svg><span class="cr"></span><span class="sp"></span>
  <svg class="i"><use href="#s2"/></svg><svg class="i"><use href="#s3"/></svg><span class="sp"></span>
  <svg class="i"><use href="#s4"/></svg><span class="sp"></span>
  <svg class="i"><use href="#s5"/></svg><span class="cr"></span><svg class="i"><use href="#s6"/></svg><span class="sp"></span>
  <svg class="i"><use href="#s7"/></svg><span class="cb"></span><span class="s3"></span><span class="gs"></span>
  <svg class="i"><use href="#c1"/></svg><svg class="i"><use href="#c2"/></svg><svg class="i"><use href="#c3"/></svg><svg class="i"><use href="#c4"/></svg><svg class="i"><use href="#c5"/></svg><svg class="i"><use href="#c6"/></svg><svg class="i"><use href="#c7"/></svg><svg class="i"><use href="#c8"/></svg><svg class="i"><use href="#c9"/></svg><span class="cb"></span>
</div>

<div class="tb tb2">
  <span class="s4"></span><span class="s3"></span>
  <svg class="i"><use href="#r1"/></svg><span class="cr"></span><svg class="i"><use href="#r2"/></svg><span class="cr"></span><span class="sp"></span>
  <svg class="i"><use href="#r3"/></svg><span class="cr"></span><svg class="i"><use href="#r4"/></svg><span class="cr"></span><svg class="i"><use href="#r5"/></svg><span class="cr"></span><svg class="i"><use href="#r6"/></svg><span class="cr"></span><span class="sp"></span>
  <svg class="i"><use href="#r7"/></svg><span class="cr"></span><svg class="i"><use href="#r8"/></svg><svg class="i"><use href="#r9"/></svg><svg class="i"><use href="#r10"/></svg><svg class="i"><use href="#r11"/></svg><svg class="i"><use href="#r12"/></svg><span class="cb"></span><span class="s1"></span><span class="gs"></span>
  <svg class="i"><use href="#f1"/></svg><svg class="i"><use href="#f2"/></svg><svg class="i"><use href="#f3"/></svg><svg class="i"><use href="#f4"/></svg><svg class="i"><use href="#f5"/></svg><span class="cr"></span><svg class="i"><use href="#f6"/></svg><svg class="i"><use href="#f7"/></svg><span class="cr"></span><svg class="i"><use href="#f8"/></svg><span class="cb"></span><span class="s3"></span><span class="gs"></span>
  <svg class="i"><use href="#d1"/></svg><span class="cr"></span><svg class="i"><use href="#d2"/></svg><span class="cr"></span><svg class="i"><use href="#d3"/></svg><span class="cr"></span><svg class="i"><use href="#d4"/></svg><span class="cr"></span><span class="cb"></span><span class="s2"></span><span class="gs"></span>
  <svg class="i"><use href="#e1"/></svg><span class="cr"></span><svg class="i"><use href="#e2"/></svg><span class="cr"></span><span class="sp"></span>
  <svg class="i"><use href="#e3"/></svg><span class="cr"></span><span class="sp"></span>
  <svg class="i"><use href="#e4"/></svg><span class="cr"></span><span class="sp"></span>
  <svg class="i"><use href="#e5"/></svg><svg class="i"><use href="#e6"/></svg><svg class="i"><use href="#e7"/></svg><span class="cr"></span><span class="sp"></span>
  <svg class="i"><use href="#e8"/></svg><svg class="i"><use href="#e9"/></svg><svg class="i"><use href="#e10"/></svg><svg class="i"><use href="#e11"/></svg><span class="cr"></span>
</div>

<div class="tb tb3">
  <div class="cbx f1 d-flex align-items-center justify-content-between"><span>没有选择过滤器</span></div>
  <div class="cbx f2 d-flex align-items-center justify-content-between"><span>仅在工作部件内</span></div>
  <span class="s3"></span>
  <svg class="i"><use href="#x1"/></svg><span class="sp"></span>
  <svg class="i"><use href="#x2"/></svg><svg class="i"><use href="#x3"/></svg><span class="cr w8"></span>
  <svg class="i"><use href="#x4"/></svg><svg class="i"><use href="#x5"/></svg><span class="sp"></span>
  <svg class="i"><use href="#x6"/></svg><span class="cr"></span><span class="sp"></span>
  <svg class="i"><use href="#x7"/></svg><svg class="i"><use href="#x8"/></svg><span class="sp"></span><span class="s2"></span>
  <svg class="i tg"><use href="#y1"/></svg><svg class="i tg"><use href="#y2"/></svg><svg class="i tg"><use href="#y2"/></svg>
  <svg class="i"><use href="#y3"/></svg>
  <svg class="i tg"><use href="#y4"/></svg><svg class="i"><use href="#y5"/></svg><svg class="i tg"><use href="#y6"/></svg><svg class="i"><use href="#y7"/></svg>
  <svg class="i tg"><use href="#y8"/></svg><svg class="i tg"><use href="#y2"/></svg><svg class="i"><use href="#y9"/></svg><span class="sp"></span>
  <svg class="i"><use href="#g1"/></svg>
  <svg class="i" viewBox="0 0 24 24"><path d="M7 9H17M7 14H17" stroke="#2a2f8c" stroke-width="2"/></svg>
  <svg class="i" viewBox="0 0 24 24"><text x="12" y="10" text-anchor="middle" font-size="9" font-weight="bold" font-family="Liberation Sans" fill="#d8403c">XYZ</text><path d="M3 17C7 12 9 21 13 17S19 13 22 17" fill="none" stroke="#333" stroke-width="1.100"/></svg>
  <span class="cr ms-auto me-1"></span>
</div>

<div class="stat d-flex align-items-center">
  <span>选择对象并使用 MB3，或者双击某一对象</span>
  <svg class="ms-auto" viewBox="0 0 17 17"><path d="M0 0H17V17H0Z" fill="#cfcfcf"/><path d="M3 4 12 3 14 13 5 14Z" fill="#fff" stroke="#888"/><path d="M5 5H8V8H5ZM8 8H11V11H8Z" fill="#777"/></svg>
  <svg class="endic" viewBox="0 0 17 17"><path d="M1 5V1H5M12 1H16V5M16 12V16H12M5 16H1V12" fill="none" stroke="#888"/><path d="M4 4H13V13H4Z" fill="#7ea4d8" stroke="#445"/><path d="M4 4H13V6H4Z" fill="#445"/></svg>
</div>

<div class="mainar d-flex">
  <div class="lp d-flex flex-column align-items-start">
    <svg viewBox="0 0 30 18"><g fill="none" stroke="#333" stroke-width="1.500"><circle cx="14" cy="9" r="5"/><path d="M14 2V4M14 14V16M7 9H9M19 9H21M9 4 10.500 5.500M19 4 17.500 5.500M9 14 10.500 12.500M19 14 17.500 12.500"/></g></svg>
    <svg viewBox="0 0 30 30"><g fill="#f5c33c" stroke="#d89a1c" stroke-width=".7"><path d="M8 1 14 1 14 7 8 7ZM12 7H18V13H12ZM4 7H10V13H4ZM20 15H27V22H20Z"/></g><path d="M11 14V27M11 18H27M11 25H19" fill="none" stroke="#1f2c9c" stroke-width="1.200"/></svg>
    <svg viewBox="0 0 30 30"><path d="M3 3 13 9 3 14ZM27 3 17 9 27 14Z" fill="#1414c0"/><path d="M15 1V28" stroke="#222" stroke-dasharray="2 2"/><path d="M3 18H13V27H3Z" fill="#f5e86c" stroke="#a07010"/><path d="M17 17 27 27H17Z" fill="#a81414"/></svg>
    <svg viewBox="0 0 30 30"><path d="M4 3H14V13C14 15 4 15 4 13Z" fill="#d8a8d8" stroke="#8a2a6c"/><ellipse cx="9" cy="3" rx="5" ry="2" fill="#eed0ec" stroke="#8a2a6c"/><path d="M11 16V27M11 19H27M11 24H18" fill="none" stroke="#1f2c9c" stroke-width="1.200"/><circle cx="22" cy="24" r="4" fill="none" stroke="#8a2a6c"/><circle cx="22" cy="24" r="1.300" fill="#8a2a6c"/></svg>
    <svg viewBox="0 0 30 30"><path d="M2 8 6 3 10 8V28H2Z" fill="#f07a28"/><path d="M10 8 14 3 18 8V28H10Z" fill="#30b050"/><path d="M18 8 24 3 28 5V24L24 28H18Z" fill="#2a8ae0"/><path d="M6 3 10 8M14 3 18 8M24 3 18 8" stroke="#fff"/><path d="M4 12H8M12 12H16M20 12H25" stroke="#fff"/></svg>
    <svg viewBox="0 0 30 30"><circle cx="10" cy="19" r="8.500" fill="#1c7ad8" stroke="#0c4ea0"/><path d="M10 14V15.500M8 18H10.500V24M7.500 24H13" stroke="#fff" stroke-width="2" fill="none"/><path d="M14 7C20 7 24 12 24 18M15 2C23 2 29 9 29 18" fill="none" stroke="#2a7ad8" stroke-width="3"/></svg>
    <svg viewBox="0 0 30 30"><path d="M6 2H20L27 9V28H6Z" fill="#f4f7fc" stroke="#3c6ac0" stroke-width="1.100"/><path d="M20 2V9H27" fill="#cfdcf4" stroke="#3c6ac0"/><circle cx="16" cy="18" r="6.500" fill="#3aa060"/><path d="M12 14C15 13 17 16 19 15L19 22C16 23 12 21 12 14Z" fill="#2a70c8"/></svg>
    <svg viewBox="0 0 30 30"><circle cx="15" cy="15" r="13" fill="#dfe6f2" stroke="#4a5a78" stroke-width="2"/><circle cx="15" cy="15" r="10" fill="#f3f6fb"/><path d="M15 7V16H22" fill="none" stroke="#111" stroke-width="2"/></svg>
    <svg viewBox="0 0 30 30"><defs><linearGradient id="rb" x1="0" x2="0" y1="0" y2="1"><stop offset="0" stop-color="#f02020"/><stop offset=".25" stop-color="#f0e020"/><stop offset=".5" stop-color="#20d040"/><stop offset=".75" stop-color="#20c0f0"/><stop offset="1" stop-color="#2020e0"/></linearGradient></defs><path d="M6 3H16V28H6Z" fill="url(#rb)"/><path d="M15 11 26 26" stroke="#111" stroke-width="3"/><path d="M15 4 17 9 22 10 17 12 15 16 13 12 9 10 13 9Z" fill="#fff"/></svg>
    <svg viewBox="0 0 30 30"><path d="M4 26 7 3 17 6 28 7 20 26Z" fill="#4a7ae0" opacity=".8"/><path d="M8 6V26M12 6V26M5 12H16M5 18H16" stroke="#a8c4f4"/><path d="M2 27H12L8 24Z" fill="#d8b020"/><path d="M15 13 25 25" stroke="#111" stroke-width="3"/><path d="M14 5 16 10 21 11 16 13 14 17 12 13 8 11 12 10Z" fill="#fff"/></svg>
    <svg viewBox="0 0 30 30"><path d="M3 24C8 22 12 20 17 12 18 8 21 6 25 3L28 5C25 8 23 9 22 12L15 22 8 27Z" fill="#6a7078"/><path d="M16 3 26 6 24 10 14 7Z" fill="#8a9098"/><path d="M3 22 12 26 8 28 3 27Z" fill="#f07a28"/></svg>
    <svg viewBox="0 0 30 30"><path d="M3 6H10V29L3 26Z" fill="#fff" stroke="#555"/><path d="M10 6V26" stroke="#888"/><path d="M10 3H28V22H10Z" fill="#fff" stroke="#777"/><path d="M13 6H25V19H13Z" fill="#d82a2a"/><path d="M16 9H22V15L19 17 16 15Z" fill="#bfe0f8"/></svg>
  </div>
  <div class="lpgap"></div>
  <div class="vp">
    <svg viewBox="38 175 1882 865">
      <rect x="38" y="852" width="1398" height="1" fill="#111"/><rect x="1502" y="852" width="418" height="1" fill="#111"/>
      <rect x="1468" y="175" width="1" height="645" fill="#111"/><rect x="1468" y="886" width="1" height="154" fill="#111"/>
      <g class="mdl" transform="translate(670,260) scale(.36996,.33333)">
        <path fill="#0086dd" d="M690,80L695,68Q705,52 725,48C900,48 1200,100 1400,235Q1408,245 1410,265L1443,335L1464,343Q1490,360 1500,425L1325,900L1270,1042L1240,1075Q1215,1100 1205,1130Q1205,1160 1216,1190L935,1935Q925,1968 890,1970L90,1755Q75,1750 70,1740L52,1690L55,1670L345,905L385,830Q392,810 395,765L620,160Q630,135 665,128L672,128Z"/>
        <path fill="#16d2ff" d="M420,755Q420,800 385,860L358,915L85,1655L872,1868L1151,1120Q1150,1060 1165,1030Q1185,990 1212,965L1240,890L1197,880L480,660Z"/>
        <path fill="#16d2ff" d="M1401,350L1432,365L1212,965L1197,898Z"/>
        <path fill="#18c5ff" d="M1432,365L1482,387L1252,1000L1212,965Z"/>
        <path fill="#14c8ff" d="M1401,350L1414,337L1464,343L1482,370L1482,387L1432,365Z"/>
        <path class="ln" d="M1414,337L1437,362M1401,350L1197,898"/>
        <path fill="url(#gN)" d="M1212,965L1252,1000Q1198,1050 1198,1145L1151,1120Q1150,1060 1165,1030Q1185,990 1212,965Z"/>
        <path fill="url(#gD)" d="M1252,1000L1270,1042L1240,1075Q1215,1100 1205,1130L1198,1145Q1198,1050 1252,1000Z"/>
        <path fill="#18c5ff" d="M1151,1120L1198,1145L920,1900L872,1868Z"/>
        <path fill="#0086dd" d="M1198,1145L1216,1190L935,1935L920,1900Z"/>
        <path fill="#18c5ff" d="M650,150L668,135L480,645L465,680L420,755Z"/>
        <path fill="#12b8ff" d="M695,70Q705,52 725,48C900,48 1200,100 1400,235L1362,240C1180,120 900,65 715,70Z"/>
        <path fill="#10c8ff" d="M1362,240L1400,235Q1408,245 1410,265L1405,270Z"/>
        <path fill="#18c5ff" d="M1362,240L1405,270L1185,868L1150,810Z"/>
        <path fill="#16d2ff" d="M715,70C900,65 1180,120 1362,240L1150,810C900,815 650,740 505,638Z"/>
        <path fill="#0070bd" d="M505,638C650,740 900,815 1150,810L1185,868C900,880 650,790 467,675Z"/>
        <path fill="#003c6b" d="M467,675C650,790 900,880 1185,868L1198,898C900,910 650,810 480,705Z"/>
        <path class="ln" d="M815,72C950,90 1130,130 1280,198M620,700C750,760 900,795 1005,805"/>
        <path fill="#11b3ff" d="M815,75L1280,198L1180,292L858,208Z"/>
        <path fill="#2eecff" d="M815,75L858,208L700,635L588,685Z"/>
        <path fill="#00a5ff" d="M1280,198L1050,810L1025,720L1180,292Z"/>
        <path fill="#00c8ff" d="M700,635L1025,720L1050,810L588,685Z"/>
        <path fill="#b0b0b0" d="M858,208L1180,292L1025,720L700,635Z"/>
        <path fill="#959595" d="M865,233L1045,282L905,652L727,605Z"/>
        <path fill="#0072bf" d="M85,1655L872,1868L868,1925L75,1712Z"/>
        <path fill="#003d6e" d="M75,1712L868,1925L882,1969L90,1755L70,1740Z"/>
        <path fill="#07a070" d="M52,1685L80,1660L75,1712L58,1700Z"/>
        <path fill="#0aa0ff" d="M872,1868L915,1897L905,1920L868,1925Z"/>
        <path fill="#0a5a98" d="M868,1925L905,1920L920,1895L935,1935Q925,1968 890,1970L882,1969Z"/>
        <path fill="url(#gS)" d="M545,1187L880,1282L900,1310Q895,1345 850,1350L510,1258L490,1235Z"/>
        <g>
          <path fill="url(#gR)" d="M493,840L510,895A55,52 0 0 0 620,895L603,840Z"/>
          <ellipse cx="548" cy="840" rx="55" ry="52" fill="#ff1a1a"/><ellipse cx="545" cy="835" rx="47" ry="45" fill="none"/>
          <path fill="url(#gR)" d="M360,915L377,965A58,55 0 0 0 493,965L476,915Z"/>
          <ellipse cx="418" cy="915" rx="58" ry="55" fill="#ff1a1a"/><ellipse cx="415" cy="910" rx="50" ry="47" fill="none"/>
          <path fill="url(#gR)" d="M548,975L565,1017A57,55 0 0 0 679,1017L662,975Z"/>
          <ellipse cx="605" cy="975" rx="57" ry="55" fill="#ff1a1a"/><ellipse cx="602" cy="970" rx="49" ry="47" fill="none"/>
          <path fill="url(#gR)" d="M418,1040L436,1090A57,55 0 0 0 550,1090L532,1040Z"/>
          <ellipse cx="475" cy="1040" rx="57" ry="55" fill="#ff1a1a"/><ellipse cx="472" cy="1035" rx="49" ry="47" fill="none"/>
          <path fill="url(#gR)" d="M474,1185L491,1228A34,34 0 0 0 559,1228L542,1185Z"/>
          <ellipse cx="508" cy="1185" rx="34" ry="34" fill="#ff1a1a"/><ellipse cx="506" cy="1182" rx="26" ry="25" fill="none"/>
          <path fill="url(#gR)" d="M571,1212L589,1252A34,34 0 0 0 657,1252L639,1212Z"/>
          <ellipse cx="605" cy="1212" rx="34" ry="34" fill="#ff1a1a"/><ellipse cx="603" cy="1209" rx="26" ry="25" fill="none"/>
          <path fill="url(#gR)" d="M715,1250L734,1292A34,34 0 0 0 802,1292L783,1250Z"/>
          <ellipse cx="749" cy="1250" rx="34" ry="34" fill="#ff1a1a"/><ellipse cx="747" cy="1247" rx="26" ry="25" fill="none"/>
          <path fill="url(#gR)" d="M814,1278L832,1318A34,34 0 0 0 900,1318L882,1278Z"/>
          <ellipse cx="848" cy="1278" rx="34" ry="34" fill="#ff1a1a"/><ellipse cx="846" cy="1275" rx="26" ry="25" fill="none"/>
          <path fill="url(#gR)" d="M940,1170C975,1240 1020,1285 1055,1282C1090,1280 1116,1190 1116,1130C1116,1100 1105,1075 1090,1065L1000,1100Z"/>
          <path fill="#ff1a1a" d="M985,952C1040,960 1088,1040 1088,1100C1088,1170 1060,1228 1030,1228C985,1225 918,1140 918,1070C918,1010 945,952 985,952Z"/>
          <path class="ln" d="M985,960C1035,968 1082,1040 1082,1100C1082,1165 1058,1220 1030,1220C990,1216 925,1135 925,1070C925,1015 948,960 985,960ZM1022,1228L1048,1282M1075,1205L1092,1262"/>
        </g>
      </g>
      <rect x="735" y="852" width="51" height="1" fill="#f4e88c"/><rect x="786" y="852" width="84" height="1" fill="#e8a030"/><rect x="870" y="852" width="168" height="1" fill="#f02a10"/>
      <g transform="translate(0,900) scale(.33333)">
        <path d="M330,100 405,122 420,160 395,228 315,205 300,170Z" fill="#d8d8d8" stroke="#aaa" stroke-width="2"/>
        <path d="M300,170 375,190 395,228M375,190 420,160M330,100 345,140 405,122M345,140 315,205" fill="none" stroke="#b5b5b5" stroke-width="2"/>
        <path d="M320,205 358,105" stroke="#a9c9a5" stroke-width="9"/><path d="M356,108 368,92 366,112Z" fill="#4aa860"/>
        <path d="M315,205 292,155" stroke="#0a3cb0" stroke-width="10"/><path d="M286,160 288,146 300,156Z" fill="#0a3cb0"/>
        <path d="M325,212 415,236" stroke="#e03030" stroke-width="6"/><path d="M410,226 445,241 408,244Z" fill="#e03030"/>
        <circle cx="316" cy="212" r="11" fill="url(#gG)"/>
        <g font-family="Liberation Sans" font-size="34" fill="none" stroke-width="2"><text x="358" y="92" stroke="#6ab070">Y</text><text x="272" y="152" stroke="#3050e0">Z</text><text x="445" y="260" stroke="#e04040">X</text></g>
      </g>
    </svg>
  </div>
</div>

<div class="tkb d-flex align-items-center flex-none">
  <div class="st d-flex align-items-center justify-content-center"><svg width="17" height="17" viewBox="0 0 17 17"><path d="M0 2.500 7 1.500V8H0ZM8 1.300 17 0V8H8ZM0 9H7V15.500L0 14.500ZM8 9H17V17L8 15.700Z" fill="#000"/></svg></div>
  <div class="s4"></div><div class="s1"></div>
  <div class="tapp d-flex align-items-center justify-content-center"><svg viewBox="0 0 26 26"><rect x="4" y="1" width="18" height="24" rx="1" fill="#6c7c8c"/><rect x="6" y="3" width="14" height="5" fill="#4fd0f0"/><g fill="#e0e4e8"><rect x="6" y="10" width="3.500" height="4"/><rect x="11" y="10" width="3.500" height="4"/><rect x="6" y="15" width="3.500" height="4"/><rect x="11" y="15" width="3.500" height="4"/><rect x="6" y="20" width="3.500" height="4"/><rect x="11" y="20" width="3.500" height="4"/><rect x="16" y="10" width="3.500" height="4"/></g><rect x="16" y="15" width="4" height="9" fill="#1a5ca0"/></svg></div>
  <div class="tapp me-1 d-flex align-items-center justify-content-center"><svg viewBox="0 0 26 26"><rect x="2" y="2" width="22" height="22" fill="#3a1010" stroke="#e02020" stroke-width="1.500"/><path d="M6 19C9 17 13 11 12 6 11 4 10 8 14 13 16 15 20 15 20 14 19 12 12 14 6 19Z" fill="none" stroke="#e8d8d8" stroke-width="1"/></svg></div>
  <div class="tapp act d-flex align-items-center justify-content-center"><svg viewBox="0 0 24 24"><use href="#start"/></svg></div>
  <div class="tray ms-auto d-flex align-items-center">
    <svg viewBox="0 0 24 20"><path d="M6 13 12 7 18 13" fill="none" stroke="#111" stroke-width="1.300"/></svg>
    <svg viewBox="0 0 24 20"><ellipse cx="12" cy="8" rx="6" ry="7" fill="#111"/><ellipse cx="12" cy="13" rx="5" ry="5.500" fill="#fff"/><path d="M6 11H18L17 13H7Z" fill="#e02020"/><path d="M5 19H11L9 17ZM13 19H19L15 17Z" fill="#f0a020"/><circle cx="10" cy="6" r="1.200" fill="#fff"/><circle cx="14" cy="6" r="1.200" fill="#fff"/></svg>
    <svg viewBox="0 0 24 20"><ellipse cx="9" cy="8" rx="7" ry="6" fill="#2cc840"/><ellipse cx="16" cy="12" rx="6" ry="5" fill="#eee"/></svg>
    <svg viewBox="0 0 24 20"><path d="M3 17A14 14 0 0 1 17 3M7 17A10 10 0 0 1 17 7M11 17A6 6 0 0 1 17 11" fill="none" stroke="#333" stroke-width="1.300"/><circle cx="19" cy="17" r="1.800" fill="#222"/></svg>
    <svg viewBox="0 0 24 20"><path d="M12 1C15 3 18 3 20 3 20 11 17 16 12 19 7 16 4 11 4 3 6 3 9 3 12 1Z" fill="#fff" stroke="#1e78e6" stroke-width="1.700"/><path d="M7 6H17L12 13ZM9 12 12 16 15 12" fill="none" stroke="#1e78e6" stroke-width="1.400"/></svg>
    <svg viewBox="0 0 24 20"><path d="M4 8H7L12 3V17L7 12H4Z" fill="none" stroke="#222"/><path d="M15 8 20 13M20 8 15 13" stroke="#222"/></svg>
    <span class="ch">中</span>
    <div class="s4"></div><div class="s1"></div>
    <svg viewBox="0 0 24 20"><rect x="4" y="2" width="16" height="16" fill="#fff" stroke="#333"/><text x="12" y="14.500" text-anchor="middle" font-size="11" font-family="Noto Sans CJK SC" fill="#111">拼</text></svg>
    <div class="clock d-flex flex-column"><span>18:43</span><span>2020/11/19</span></div>
    <svg viewBox="0 0 24 20"><path d="M4 2H20V15H14L12 18 10 15H4Z" fill="none" stroke="#222" stroke-width="1.100"/></svg>
  </div>
</div>

<svg class="wm" viewBox="0 0 1020 360">
  <path d="M280,75 385,135V260L280,320 172,260V135Z" fill="#a9d8f3" fill-opacity=".85"/>
  <path d="M280,75 385,135 385,260 330,170Z" fill="#83c9ef"/>
  <path d="M385,260 280,320 220,240 330,228Z" fill="#6fbde8"/>
  <path d="M172,135 280,75 232,170Z" fill="#c3e4f7"/>
  <path d="M280,120 345,158V232L280,270 215,232V158Z" fill="none" stroke="#fff" stroke-opacity=".7" stroke-width="4"/>
  <path d="M280,142 330,170 280,200 232,170Z" fill="#b3dcf4"/><path d="M232,170 280,200V258L232,228Z" fill="#a3d5f2"/><path d="M330,170 280,200V258L330,228Z" fill="#70bce6"/>
  <text x="410" y="222" font-family="Liberation Sans,Noto Sans CJK SC,sans-serif" font-weight="bold" font-size="114" fill="#fff" fill-opacity=".5" textLength="530">3D世界网</text>
  <text x="415" y="278" font-family="Liberation Sans,sans-serif" font-size="34" fill="#fff" fill-opacity=".55" textLength="520">WWW.3DSJW.COM</text>
</svg>
<div class="sld"><i></i></div>
</body>
</html>
